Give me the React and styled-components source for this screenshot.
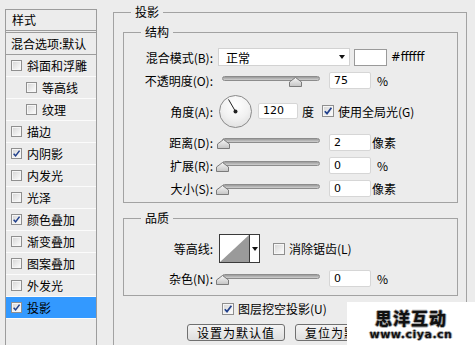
import React from "react";
import styled, { createGlobalStyle } from "styled-components";

const GlobalStyle = createGlobalStyle`
  html, body {
    margin: 0;
    padding: 0;
    background: #ececec;
  }
  body {
    font-family: "Noto Sans CJK SC", "Noto Sans", sans-serif;
    font-size: 12px;
    color: #000;
  }
`;

const styles = [
  { name: "斜面和浮雕", checked: false },
  { name: "等高线", checked: false, indent: true },
  { name: "纹理", checked: false, indent: true },
  { name: "描边", checked: false },
  { name: "内阴影", checked: true },
  { name: "内发光", checked: false },
  { name: "光泽", checked: false },
  { name: "颜色叠加", checked: true },
  { name: "渐变叠加", checked: false },
  { name: "图案叠加", checked: false },
  { name: "外发光", checked: false },
  { name: "投影", checked: true, active: true },
];

function CheckBox({ checked, size = 12 }) {
  return (
    <Box $size={size}>
      {checked && (
        <svg width={size - 2} height={size - 2} viewBox="0 0 10 10">
          <path d="M1.8 5.2 L4 7.6 L8.4 1.8" fill="none" stroke="#21408c" strokeWidth="1.7" />
        </svg>
      )}
    </Box>
  );
}

function Slider({ value }) {
  return (
    <SliderWrap>
      <Track />
      <Thumb style={{ left: 4 + value * 98 - 6.5 }} width="13" height="10" viewBox="0 0 13 10">
        <defs>
          <linearGradient id="tg" x1="0" y1="0" x2="0" y2="1">
            <stop offset="0" stopColor="#f6f6f6" />
            <stop offset="1" stopColor="#c4c4c4" />
          </linearGradient>
        </defs>
        <polygon points="6.5,0.5 12.5,5 12.5,9.5 0.5,9.5 0.5,5" fill="url(#tg)" stroke="#7b7b7b" />
      </Thumb>
    </SliderWrap>
  );
}

function App() {
  return (
    <>
      <GlobalStyle />
      <Page>
        <Sidebar>
          <SideHead>样式</SideHead>
          <BlendRow>混合选项:默认</BlendRow>
          {styles.map((s) => (
            <StyleRow key={s.name} $indent={s.indent} $active={s.active}>
              <CheckBox checked={s.checked} size={11} />
              <span>{s.name}</span>
            </StyleRow>
          ))}
        </Sidebar>

        <Outer>
          <Legend>投影</Legend>
          <Inner>
            <Legend>结构</Legend>
            <Rows>
              <Row>
                <Label>混合模式(B):</Label>
                <Select>
                  <span>正常</span>
                  <Arrow />
                </Select>
                <Swatch />
                <Hex>#ffffff</Hex>
              </Row>
              <Row>
                <Label>不透明度(O):</Label>
                <Slider value={0.75} />
                <NumInput>75</NumInput>
                <Unit>%</Unit>
              </Row>
              <Row $h={34}>
                <Label>角度(A):</Label>
                <Dial>
                  <svg width="31" height="31" viewBox="0 0 31 31">
                    <line x1="15.5" y1="15.5" x2="8.5" y2="3.4" stroke="#222" strokeWidth="1" />
                    <circle cx="15.5" cy="15.5" r="2" fill="#222" />
                  </svg>
                </Dial>
                <NumInput $w={40} $h={16} $ml={6}>120</NumInput>
                <Unit $ml={4}>度</Unit>
                <CheckLabel $ml={8}>
                  <CheckBox checked />
                  使用全局光(G)
                </CheckLabel>
              </Row>
              <Row>
                <Label>距离(D):</Label>
                <Slider value={0.02} />
                <NumInput>2</NumInput>
                <Unit $ml={1}>像素</Unit>
              </Row>
              <Row>
                <Label>扩展(R):</Label>
                <Slider value={0} />
                <NumInput>0</NumInput>
                <Unit>%</Unit>
              </Row>
              <Row>
                <Label>大小(S):</Label>
                <Slider value={0} />
                <NumInput>0</NumInput>
                <Unit $ml={1}>像素</Unit>
              </Row>
            </Rows>
          </Inner>

          <Inner $quality>
            <Legend>品质</Legend>
            <Rows $gap={6}>
              <Row $h={29}>
                <Label>等高线:</Label>
                <Contour>
                  <svg width="29" height="27" viewBox="0 0 29 27">
                    <polygon points="0,27 29,0 29,27" fill="#9a9a9a" />
                  </svg>
                  <ContourDrop>
                    <Arrow />
                  </ContourDrop>
                </Contour>
                <CheckLabel $ml={13}>
                  <CheckBox />
                  消除锯齿(L)
                </CheckLabel>
              </Row>
              <Row>
                <Label>杂色(N):</Label>
                <Slider value={0} />
                <NumInput>0</NumInput>
                <Unit>%</Unit>
              </Row>
            </Rows>
          </Inner>

          <KnockRow>
            <CheckLabel>
              <CheckBox checked />
              图层挖空投影(U)
            </CheckLabel>
          </KnockRow>
          <ButtonRow>
            <Button>设置为默认值</Button>
            <Button>复位为默认值</Button>
          </ButtonRow>
        </Outer>

        <Watermark>
          <WmTitle>思洋互动</WmTitle>
          <WmUrl>www.ciya.cn</WmUrl>
        </Watermark>
      </Page>
    </>
  );
}

const Page = styled.div`
  position: relative;
  display: flex;
  align-items: flex-start;
  width: 475px;
  height: 345px;
  overflow: hidden;
  background: #ececec;
`;

const Sidebar = styled.div`
  box-sizing: border-box;
  flex-shrink: 0;
  width: 92px;
  height: 360px;
  margin: 9px 0 0 5px;
  border: 1px solid #9c9c9c;
  background: #ececec;
`;

const SideHead = styled.div`
  height: 20px;
  line-height: 20px;
  padding-left: 6px;
  border-bottom: 1px solid #9c9c9c;
  margin-bottom: 1px;
`;

const BlendRow = styled.div`
  height: 21px;
  line-height: 21px;
  padding-left: 5px;
  border-top: 1px solid #9c9c9c;
  border-bottom: 1px solid #9c9c9c;
  white-space: nowrap;
`;

const StyleRow = styled.div`
  display: flex;
  align-items: center;
  gap: 5px;
  height: 21px;
  padding-left: ${(p) => (p.$indent ? 20 : 5)}px;
  border-bottom: 1px solid #fbfbfb;
  background: ${(p) => (p.$active ? "#3399ff" : "transparent")};
`;

const Box = styled.span`
  box-sizing: border-box;
  display: inline-flex;
  align-items: center;
  justify-content: center;
  flex-shrink: 0;
  width: ${(p) => p.$size}px;
  height: ${(p) => p.$size}px;
  border: 1px solid #8f8f8f;
  background: linear-gradient(135deg, #d4d4d4 0%, #f2f2f2 70%, #fff 100%);
  box-shadow: inset 0 0 0 1px #f6f6f6;
`;

const Outer = styled.fieldset`
  box-sizing: border-box;
  flex-shrink: 0;
  width: 354px;
  height: 370px;
  margin: 4px 0 0 16px;
  padding: 0;
  border: 1px solid #a2a2a2;
  min-width: 0;
`;

const Legend = styled.legend`
  margin-left: 17px;
  padding: 0 4px;
  font-size: 12px;
  line-height: 16px;
`;

const Inner = styled.fieldset`
  box-sizing: border-box;
  width: 335px;
  margin: ${(p) => (p.$quality ? 7 : 4)}px 0 0 9px;
  padding: 8px 0 ${(p) => (p.$quality ? 8 : 5)}px 0;
  border: 1px solid #a2a2a2;
  min-width: 0;
`;

const Rows = styled.div`
  display: flex;
  flex-direction: column;
  gap: ${(p) => p.$gap || 5}px;
`;

const Row = styled.div`
  display: flex;
  align-items: center;
  height: ${(p) => p.$h || 18}px;
`;

const Label = styled.div`
  width: 89px;
  margin-right: 5px;
  text-align: right;
  white-space: nowrap;
`;

const Select = styled.div`
  box-sizing: border-box;
  display: flex;
  align-items: center;
  justify-content: space-between;
  width: 132px;
  height: 18px;
  padding: 0 4px 0 7px;
  background: #fff;
  border: 1px solid #d2d2d2;
`;

const Arrow = styled.span`
  width: 0;
  height: 0;
  border-left: 3.5px solid transparent;
  border-right: 3.5px solid transparent;
  border-top: 4px solid #111;
`;

const Swatch = styled.div`
  box-sizing: border-box;
  width: 33px;
  height: 17px;
  margin-left: 4px;
  background: #fff;
  border: 1px solid #9a9a9a;
`;

const Hex = styled.span`
  margin-left: 4px;
  font-family: "DejaVu Sans", sans-serif;
  font-size: 11.5px;
`;

const SliderWrap = styled.div`
  position: relative;
  width: 107px;
  height: 18px;
  flex-shrink: 0;
`;

const Track = styled.div`
  box-sizing: border-box;
  width: 98px;
  height: 5px;
  margin: 5px 0 0 4px;
  border-radius: 3px;
  border: 1px solid #8c8c8c;
  background: linear-gradient(#9a9a9a, #d0d0d0);
`;

const Thumb = styled.svg`
  position: absolute;
  top: 6px;
`;

const NumInput = styled.div`
  box-sizing: border-box;
  width: ${(p) => p.$w || 42}px;
  height: ${(p) => p.$h || 17}px;
  margin-left: ${(p) => (p.$ml != null ? p.$ml : 4)}px;
  padding-left: 4px;
  line-height: ${(p) => (p.$h || 17) - 2}px;
  background: #fff;
  border: 1px solid #d6d6d6;
  border-radius: 2px;
  font-family: "DejaVu Sans", sans-serif;
  font-size: 11px;
`;

const Unit = styled.span`
  margin-left: ${(p) => (p.$ml != null ? p.$ml : 6)}px;
  white-space: nowrap;
`;

const Dial = styled.div`
  box-sizing: border-box;
  width: 33px;
  height: 33px;
  margin-left: 1px;
  border-radius: 50%;
  border: 1px solid #8a8a8a;
  background: radial-gradient(circle at 50% 30%, #ffffff 0%, #f2f2f2 50%, #d9d9d9 100%);
`;

const CheckLabel = styled.label`
  display: flex;
  align-items: center;
  gap: 4px;
  margin-left: ${(p) => p.$ml || 0}px;
  white-space: nowrap;
`;

const Contour = styled.div`
  box-sizing: border-box;
  display: flex;
  width: 41px;
  height: 29px;
  margin-left: 1px;
  border: 1px solid #3a3a3a;
  background: #fff;
`;

const ContourDrop = styled.div`
  display: flex;
  align-items: center;
  justify-content: center;
  flex: 1;
  border-left: 1px solid #3a3a3a;
`;

const KnockRow = styled.div`
  display: flex;
  height: 13px;
  align-items: center;
  margin-top: 6px;
  padding-left: 108px;
`;

const ButtonRow = styled.div`
  display: flex;
  justify-content: center;
  gap: 10px;
  margin-top: 9px;
`;

const Button = styled.button`
  box-sizing: border-box;
  width: 98px;
  height: 17px;
  padding: 0;
  font-family: "Noto Sans CJK SC", sans-serif;
  font-size: 12px;
  line-height: 15px;
  letter-spacing: 1px;
  color: #000;
  border: 1px solid #707070;
  border-radius: 3px;
  background: linear-gradient(#f4f4f4, #dedede);
`;

const Watermark = styled.div`
  position: absolute;
  right: 0;
  bottom: 0;
  box-sizing: border-box;
  width: 128px;
  height: 43px;
  padding-top: 5px;
  display: flex;
  flex-direction: column;
  align-items: center;
  background: #fff;
`;

const WmTitle = styled.div`
  font-family: "Noto Sans CJK SC", sans-serif;
  font-weight: 900;
  font-size: 17px;
  line-height: 21px;
  letter-spacing: 1px;
  color: #111;
  text-shadow: -1px 0 #aaa, 1px 0 #aaa, 0 1px #aaa, 0 -1px #aaa;
`;

const WmUrl = styled.div`
  font-family: "DejaVu Sans", sans-serif;
  font-weight: bold;
  font-size: 11px;
  line-height: 13px;
  letter-spacing: 0.5px;
  color: #111;
  text-shadow: -1px 0 #aaa, 1px 0 #aaa, 0 1px #aaa, 0 -1px #aaa;
`;

export default App;
